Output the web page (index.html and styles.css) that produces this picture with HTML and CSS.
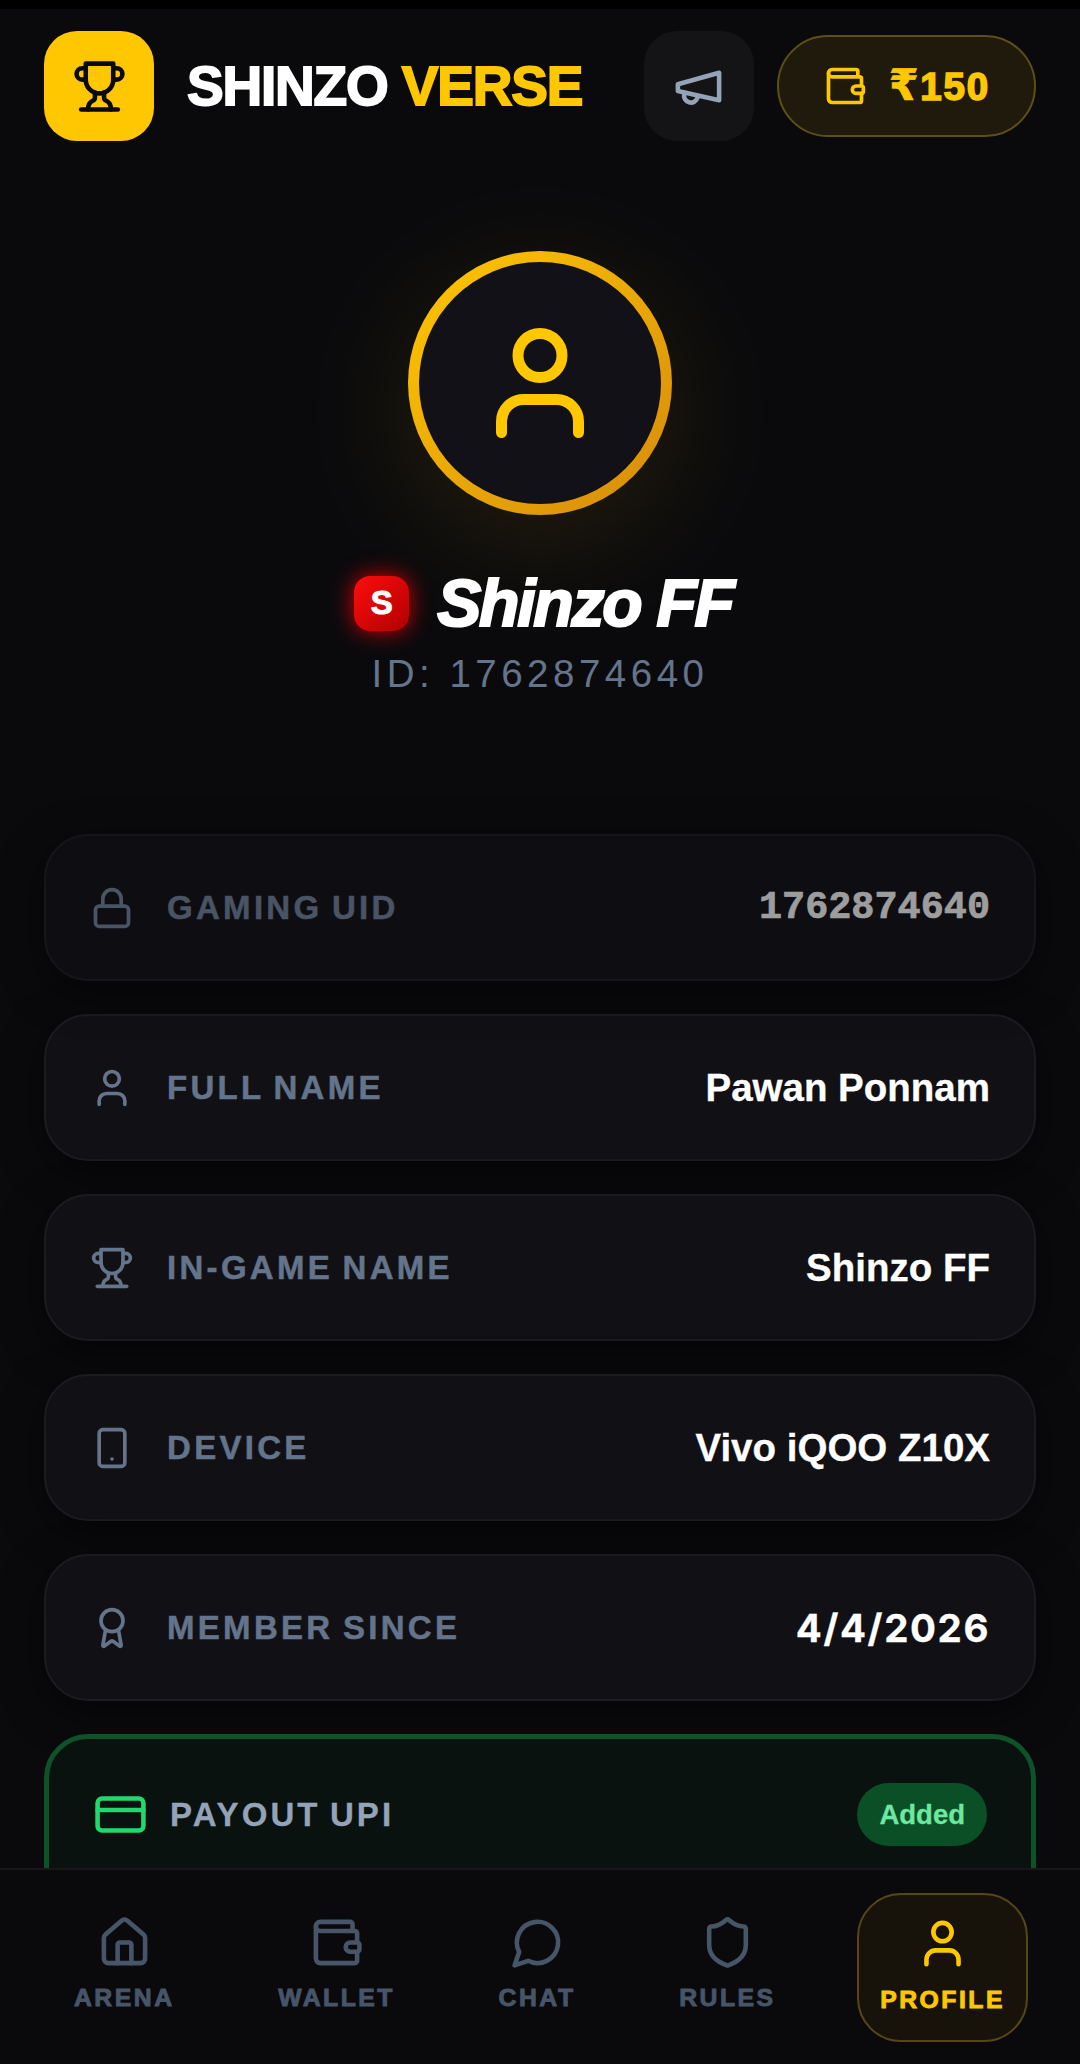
FILE: index.html
```html
<!DOCTYPE html>
<html lang="en">
<head>
    <meta charset="UTF-8">
    <meta name="viewport" content="width=device-width, initial-scale=1.0">
    <title>Shinzo Verse - Profile</title>
    <link rel="stylesheet" href="styles.css">
</head>
<body>

    <!-- icon set -->
    <svg class="sprite" aria-hidden="true">
        <symbol id="i-trophy" viewBox="0 0 24 24">
            <path d="M6 9H4.5a2.5 2.5 0 0 1 0-5H6"/>
            <path d="M18 9h1.5a2.5 2.5 0 0 0 0-5H18"/>
            <path d="M4 22h16"/>
            <path d="M10 14.66V17c0 .55-.47.98-.97 1.21C7.85 18.75 7 20.24 7 22"/>
            <path d="M14 14.66V17c0 .55.47.98.97 1.21C16.15 18.75 17 20.24 17 22"/>
            <path d="M18 2H6v7a6 6 0 0 0 12 0V2Z"/>
        </symbol>
        <symbol id="i-megaphone" viewBox="0 0 24 24">
            <path d="m3 11 18-5v12L3 14v-3z"/>
            <path d="M11.6 16.8a3 3 0 1 1-5.8-1.6"/>
        </symbol>
        <symbol id="i-wallet" viewBox="0 0 24 24">
            <path d="M19 7V4a1 1 0 0 0-1-1H5a2 2 0 0 0 0 4h15a1 1 0 0 1 1 1v4h-3a2 2 0 0 0 0 4h3a1 1 0 0 0 1-1v-2a1 1 0 0 0-1-1"/>
            <path d="M3 5v14a2 2 0 0 0 2 2h15a1 1 0 0 0 1-1v-4"/>
        </symbol>
        <symbol id="i-user" viewBox="0 0 24 24">
            <path d="M19 21v-2a4 4 0 0 0-4-4H9a4 4 0 0 0-4 4v2"/>
            <circle cx="12" cy="7" r="4"/>
        </symbol>
        <symbol id="i-lock" viewBox="0 0 24 24">
            <rect x="3" y="11" width="18" height="11" rx="2"/>
            <path d="M7 11V7a5 5 0 0 1 10 0v4"/>
        </symbol>
        <symbol id="i-phone" viewBox="0 0 24 24">
            <rect x="5" y="2" width="14" height="20" rx="2"/>
            <path d="M12 18h.01"/>
        </symbol>
        <symbol id="i-award" viewBox="0 0 24 24">
            <path d="m15.477 12.89 1.515 8.526a.5.5 0 0 1-.81.47l-3.58-2.687a1 1 0 0 0-1.197 0l-3.586 2.686a.5.5 0 0 1-.81-.469l1.514-8.526"/>
            <circle cx="12" cy="8" r="6"/>
        </symbol>
        <symbol id="i-card" viewBox="0 0 24 24">
            <rect x="2" y="5" width="20" height="14" rx="2"/>
            <path d="M2 10h20"/>
        </symbol>
        <symbol id="i-home" viewBox="0 0 24 24">
            <path d="M15 21v-8a1 1 0 0 0-1-1h-4a1 1 0 0 0-1 1v8"/>
            <path d="M3 10a2 2 0 0 1 .709-1.528l7-5.999a2 2 0 0 1 2.582 0l7 5.999A2 2 0 0 1 21 10v9a2 2 0 0 1-2 2H5a2 2 0 0 1-2-2z"/>
        </symbol>
        <symbol id="i-chat" viewBox="0 0 24 24">
            <path d="M7.9 20A9 9 0 1 0 4 16.1L2 22Z"/>
        </symbol>
        <symbol id="i-shield" viewBox="0 0 24 24">
            <path d="M20 13c0 5-3.5 7.5-7.66 8.95a1 1 0 0 1-.67-.01C7.5 20.5 4 18 4 13V6a1 1 0 0 1 1-1c2 0 4.5-1.2 6.24-2.72a1.17 1.17 0 0 1 1.52 0C14.51 3.81 17 5 19 5a1 1 0 0 1 1 1z"/>
        </symbol>
    </svg>

    <div class="status-strip"></div>

    <header class="topbar">
        <div class="brand">
            <div class="brand-logo"><svg class="icon icon-lg"><use href="#i-trophy"/></svg></div>
            <div class="brand-name">SHINZO <span class="accent">VERSE</span></div>
        </div>
        <div class="topbar-actions">
            <button class="notice-btn"><svg class="icon icon-lg"><use href="#i-megaphone"/></svg></button>
            <div class="balance">
                <svg class="icon"><use href="#i-wallet"/></svg>
                <span><span class="rupee">₹</span>150</span>
            </div>
        </div>
    </header>

    <main class="content">
        <section class="profile-head">
            <div class="avatar">
                <div class="avatar-inner"><svg class="icon icon-xl"><use href="#i-user"/></svg></div>
            </div>
            <div class="name-row">
                <div class="rank-badge">S</div>
                <h1 class="player-name">Shinzo FF</h1>
            </div>
            <div class="player-id">ID: 1762874640</div>
        </section>

        <section class="details">
            <div class="row locked">
                <div class="row-label"><svg class="icon"><use href="#i-lock"/></svg>GAMING UID</div>
                <div class="row-value mono">1762874640</div>
            </div>
            <div class="row">
                <div class="row-label"><svg class="icon"><use href="#i-user"/></svg>FULL NAME</div>
                <div class="row-value">Pawan Ponnam</div>
            </div>
            <div class="row">
                <div class="row-label"><svg class="icon"><use href="#i-trophy"/></svg>IN-GAME NAME</div>
                <div class="row-value">Shinzo FF</div>
            </div>
            <div class="row">
                <div class="row-label"><svg class="icon"><use href="#i-phone"/></svg>DEVICE</div>
                <div class="row-value">Vivo iQOO Z10X</div>
            </div>
            <div class="row">
                <div class="row-label"><svg class="icon"><use href="#i-award"/></svg>MEMBER SINCE</div>
                <div class="row-value date">4/4/2026</div>
            </div>
            <div class="payout">
                <div class="payout-head">
                    <div class="payout-label"><svg class="icon icon-lg"><use href="#i-card"/></svg>PAYOUT UPI</div>
                    <div class="payout-status">Added</div>
                </div>
            </div>
        </section>
    </main>

    <nav class="tabbar">
        <a class="tab"><svg class="icon icon-lg"><use href="#i-home"/></svg><span>ARENA</span></a>
        <a class="tab"><svg class="icon icon-lg"><use href="#i-wallet"/></svg><span>WALLET</span></a>
        <a class="tab"><svg class="icon icon-lg"><use href="#i-chat"/></svg><span>CHAT</span></a>
        <a class="tab"><svg class="icon icon-lg"><use href="#i-shield"/></svg><span>RULES</span></a>
        <a class="tab active"><svg class="icon icon-lg"><use href="#i-user"/></svg><span>PROFILE</span></a>
    </nav>

</body>
</html>
```

FILE: styles.css
```css
* {
    box-sizing: border-box;
}

body {
    margin: 0;
    height: 100vh;
    display: flex;
    flex-direction: column;
    overflow: hidden;
    background: #0a0a0d;
    color: #fff;
    font-family: "Liberation Sans", Arial, sans-serif;
}

.sprite {
    display: none;
}

.icon {
    width: 44px;
    height: 44px;
    flex: none;
    fill: none;
    stroke: currentColor;
    stroke-width: 2;
    stroke-linecap: round;
    stroke-linejoin: round;
}

.icon-lg {
    width: 55px;
    height: 55px;
}

.icon-xl {
    width: 132px;
    height: 132px;
}

.status-strip {
    height: 9px;
    flex: none;
    background: #000;
}

/* top bar */
.topbar {
    flex: none;
    display: flex;
    align-items: center;
    justify-content: space-between;
    padding: 22px 44px;
}

.brand {
    display: flex;
    align-items: center;
    gap: 33px;
}

.brand-logo {
    width: 110px;
    height: 110px;
    border-radius: 33px;
    background: #ffc700;
    color: #0a0a0d;
    display: flex;
    align-items: center;
    justify-content: center;
}

.brand-name {
    font-size: 55px;
    font-weight: 900;
    letter-spacing: -1.2px;
    -webkit-text-stroke: 1.8px currentColor;
    white-space: nowrap;
}

.accent {
    color: #ffc700;
}

.topbar-actions {
    display: flex;
    align-items: center;
    gap: 23px;
}

.notice-btn {
    width: 110px;
    height: 110px;
    padding: 0;
    border: none;
    border-radius: 33px;
    background: #141417;
    color: #94a3b8;
    display: flex;
    align-items: center;
    justify-content: center;
}

.balance {
    display: flex;
    align-items: center;
    gap: 22px;
    height: 102px;
    padding: 0 44px;
    border: 2.75px solid #5e4f17;
    border-radius: 51px;
    background: #1f1a0b;
    color: #ffc700;
    font-size: 38.5px;
    font-weight: 900;
    letter-spacing: 1.8px;
    white-space: nowrap;
    -webkit-text-stroke: 1.6px currentColor;
}

.rupee {
    font-family: "DejaVu Sans", sans-serif;
    font-size: 43px;
    line-height: 1;
    -webkit-text-stroke: 0.6px currentColor;
}

.content {
    flex: 1;
    min-height: 0;
    overflow: hidden;
    padding: 0 44px;
}

.profile-head {
    display: flex;
    flex-direction: column;
    align-items: center;
    padding-top: 88px;
}

.avatar {
    width: 264px;
    height: 264px;
    padding: 11px;
    border-radius: 50%;
    background: linear-gradient(135deg, #ffc700, #d68a0c);
    box-shadow: 0 28px 140px rgba(255, 199, 0, 0.12);
}

.avatar-inner {
    width: 100%;
    height: 100%;
    border-radius: 50%;
    background: #111117;
    color: #ffc700;
    display: flex;
    align-items: center;
    justify-content: center;
}

.name-row {
    display: flex;
    align-items: center;
    gap: 28px;
    margin-top: 55px;
    padding-left: 7px;
    height: 66px;
}

.rank-badge {
    width: 55px;
    height: 55px;
    border-radius: 16px;
    background: linear-gradient(135deg, #ff0d0d, #b00000);
    box-shadow: 0 0 22px rgba(255, 0, 0, 0.85);
    display: flex;
    align-items: center;
    justify-content: center;
    font-size: 33px;
    font-weight: 900;
    -webkit-text-stroke: 1px #fff;
}

.player-name {
    margin: 0;
    font-size: 66px;
    font-weight: 900;
    font-style: italic;
    letter-spacing: -2.2px;
    line-height: 1;
    -webkit-text-stroke: 2.2px #fff;
}

.player-id {
    margin-top: 11px;
    font-size: 38.5px;
    line-height: 54px;
    letter-spacing: 4.5px;
    color: #64748b;
}

/* detail rows */
.details {
    display: flex;
    flex-direction: column;
    gap: 33px;
    margin-top: 133px;
}

.row {
    flex: none;
    height: 147px;
    padding: 0 44px;
    border: 2.75px solid #1c1c20;
    border-radius: 44px;
    background: #111115;
    box-shadow: 0 11px 40px rgba(0, 0, 0, 0.5);
    display: flex;
    align-items: center;
    justify-content: space-between;
}

.row.locked {
    opacity: 0.7;
}

.row-label {
    display: flex;
    align-items: center;
    gap: 33px;
    color: #64748b;
    font-size: 33px;
    font-weight: 700;
    letter-spacing: 3.3px;
    word-spacing: -3px;
    -webkit-text-stroke: 0.5px currentColor;
}

.row-value {
    font-size: 38.5px;
    font-weight: 700;
    -webkit-text-stroke: 0.3px currentColor;
}

.row-value.mono {
    color: #dcdcdc;
    font-family: "Liberation Mono", monospace;
    -webkit-text-stroke: 0.7px currentColor;
}

.row-value.date {
    font-family: Inter, "Liberation Sans", sans-serif;
    letter-spacing: 1.6px;
}

.payout {
    flex: none;
    min-height: 300px;
    padding: 44px;
    border: 5.5px solid #0f5229;
    border-radius: 44px;
    background: #0a1210;
}

.payout-head {
    display: flex;
    align-items: center;
    justify-content: space-between;
}

.payout-label {
    display: flex;
    align-items: center;
    gap: 22px;
    color: #94a3b8;
    font-size: 33px;
    font-weight: 700;
    letter-spacing: 3.1px;
    word-spacing: -3px;
    -webkit-text-stroke: 0.3px currentColor;
}

.payout-label .icon {
    color: #22d86e;
}

.payout-status {
    height: 63px;
    padding: 0 22px;
    border-radius: 32px;
    background: #0a4f26;
    color: #6ee7a0;
    font-size: 27.5px;
    font-weight: 700;
    line-height: 63px;
    -webkit-text-stroke: 0.3px currentColor;
}

/* tab bar */
.tabbar {
    flex: none;
    display: flex;
    align-items: center;
    justify-content: space-between;
    height: 196px;
    padding: 0 52px;
    border-top: 2.75px solid #17171a;
    background: #0a0a0d;
}

.tab {
    display: flex;
    flex-direction: column;
    align-items: center;
    gap: 12px;
    padding: 0 22px 6px;
    color: #475569;
    font-size: 24.75px;
    font-weight: 900;
    letter-spacing: 2.5px;
    line-height: 32px;
    -webkit-text-stroke: 0.9px currentColor;
}

.tab.active {
    padding: 21px 21px 24px;
    gap: 13px;
    border: 2.75px solid #57461a;
    border-radius: 44px;
    background: #17130b;
    color: #ffc700;
}
```
